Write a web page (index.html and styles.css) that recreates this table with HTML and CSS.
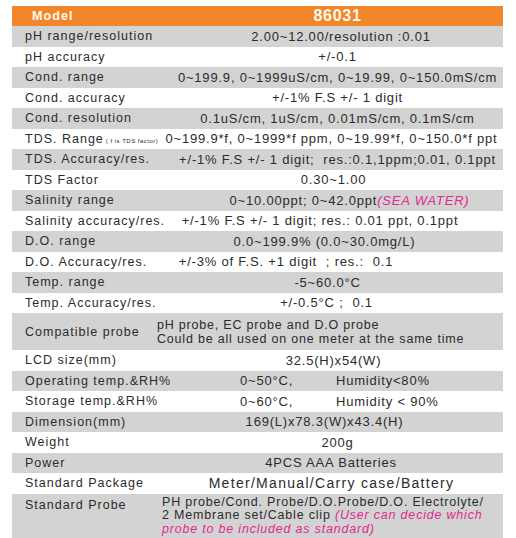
FILE: index.html
```html
<!DOCTYPE html>
<html>
<head>
<meta charset="utf-8">
<link rel="stylesheet" href="styles.css">
</head>
<body>
<div class="spec">
  <div class="row head"><div class="lab">Model</div><div class="val model">86031</div></div>
  <div class="row g"><div class="lab">pH range/resolution</div><div class="val pl7">2.00~12.00/resolution :0.01</div></div>
  <div class="row"><div class="lab">pH accuracy</div><div class="val">+/-0.1</div></div>
  <div class="row g"><div class="lab">Cond. range</div><div class="val">0~199.9, 0~1999uS/cm, 0~19.99, 0~150.0mS/cm</div></div>
  <div class="row"><div class="lab">Cond. accuracy</div><div class="val">+/-1% F.S +/- 1 digit</div></div>
  <div class="row g"><div class="lab">Cond. resolution</div><div class="val">0.1uS/cm, 1uS/cm, 0.01mS/cm, 0.1mS/cm</div></div>
  <div class="row"><div class="lab">TDS. Range<span class="tiny">( f is TDS factor)</span></div><div class="val ml12">0~199.9*f, 0~1999*f ppm, 0~19.99*f, 0~150.0*f ppt</div></div>
  <div class="row g"><div class="lab">TDS. Accuracy/res.</div><div class="val">+/-1% F.S +/- 1 digit;&nbsp; res.:0.1,1ppm;0.01, 0.1ppt</div></div>
  <div class="row"><div class="lab">TDS Factor</div><div class="val pr8">0.30~1.00</div></div>
  <div class="row g"><div class="lab">Salinity range</div><div class="val pl24">0~10.00ppt; 0~42.0ppt<span class="pink">(SEA WATER)</span></div></div>
  <div class="row"><div class="lab">Salinity accuracy/res.</div><div class="val pr35">+/-1% F.S +/- 1 digit; res.: 0.01 ppt, 0.1ppt</div></div>
  <div class="row g"><div class="lab">D.O. range</div><div class="val pr26">0.0~199.9% (0.0~30.0mg/L)</div></div>
  <div class="row"><div class="lab">D.O. Accuracy/res.</div><div class="val pr103">+/-3% of F.S. +1 digit&nbsp; ; res.:&nbsp; 0.1</div></div>
  <div class="row g"><div class="lab">Temp. range</div><div class="val pr20">-5~60.0°C</div></div>
  <div class="row"><div class="lab">Temp. Accuracy/res.</div><div class="val pr22">+/-0.5°C ;&nbsp; 0.1</div></div>
  <div class="row g compat"><div class="lab">Compatible probe</div><div class="val lines">pH probe, EC probe and D.O probe<br>Could be all used on one meter at the same time</div></div>
  <div class="row"><div class="lab">LCD size(mm)</div><div class="val pr8">32.5(H)x54(W)</div></div>
  <div class="row g"><div class="lab">Operating temp.&amp;RH%</div><div class="val pair"><span class="first">0~50°C,</span><span>Humidity&lt;80%</span></div></div>
  <div class="row"><div class="lab">Storage temp.&amp;RH%</div><div class="val pair"><span class="first">0~60°C,</span><span>Humidity &lt; 90%</span></div></div>
  <div class="row g"><div class="lab">Dimension(mm)</div><div class="val pr26">169(L)x78.3(W)x43.4(H)</div></div>
  <div class="row"><div class="lab">Weight</div><div class="val">200g</div></div>
  <div class="row g"><div class="lab">Power</div><div class="val pr13">4PCS AAA Batteries</div></div>
  <div class="row"><div class="lab">Standard Package</div><div class="val big pr12">Meter/Manual/Carry case/Battery</div></div>
  <div class="row g probe"><div class="lab">Standard Probe</div><div class="val lines">PH probe/Cond. Probe/D.O.Probe/D.O. Electrolyte/<br>2 Membrane set/Cable clip <span class="pink">(User can decide which<br>probe to be included as standard)</span></div></div>
</div>
</body>
</html>
```

FILE: styles.css
```css
html, body {
  margin: 0;
  padding: 0;
  background: #ffffff;
}
body {
  font-family: "Liberation Sans", Arial, sans-serif;
  color: #2b2b2b;
}
.spec {
  width: 491px;
  margin: 6px 0 0 12px;
}
.row {
  display: grid;
  grid-template-columns: 160px 1fr;
  height: 20.5px;
  align-items: center;
  background: #ffffff;
}
.row.g {
  background: #d3d3d3;
}
.lab {
  padding-left: 13px;
  white-space: nowrap;
  font-size: 12.5px;
  letter-spacing: 1px;
}
.val {
  text-align: center;
  white-space: nowrap;
  font-size: 13px;
  letter-spacing: 0.8px;
}
.head {
  height: 20px;
  background: #f0872b;
  color: #fff8ee;
}
.head .lab {
  padding-left: 20px;
  font-weight: bold;
  font-size: 12.5px;
  letter-spacing: 1.1px;
}
.head .model {
  font-weight: bold;
  font-size: 16px;
  letter-spacing: 0.7px;
}
.tiny {
  font-size: 6px;
  letter-spacing: 0.5px;
  margin-left: 2px;
}
.pink {
  color: #e12b8e;
  font-style: italic;
}
.pl7 { padding-left: 7px; }
.pl24 { padding-left: 24px; }
.pr8 { padding-right: 8px; }
.pr12 { padding-right: 12px; }
.pr13 { padding-right: 13px; }
.pr20 { padding-right: 20px; }
.pr22 { padding-right: 22px; }
.pr26 { padding-right: 26px; }
.pr35 { padding-right: 35px; }
.pr103 { padding-right: 103px; }
.ml12 { margin-left: -12px; }
.big {
  font-size: 14px;
  letter-spacing: 1.3px;
}
.pair {
  display: flex;
  text-align: left;
  padding-left: 68px;
}
.pair .first {
  width: 96px;
}
.lines {
  text-align: left;
  font-size: 12.5px;
}
.compat {
  height: 37px;
  grid-template-columns: 145px 1fr;
}
.compat .lines {
  line-height: 13.5px;
  padding-top: 2px;
}
.probe {
  height: 48px;
  grid-template-columns: 150px 1fr;
  align-items: start;
}
.probe .lab {
  line-height: 13px;
  padding-top: 5px;
}
.probe .lines {
  line-height: 13.5px;
  padding-top: 2px;
}
```
